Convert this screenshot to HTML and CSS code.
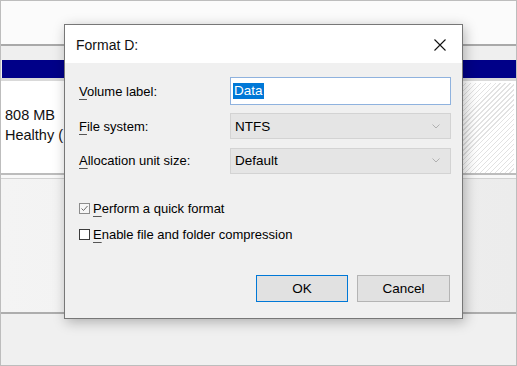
FILE: index.html
```html
<!DOCTYPE html>
<html>
<head>
<meta charset="utf-8">
<link rel="stylesheet" href="styles.css">
</head>
<body>
<div class="window">
  <div class="top"></div>
  <div class="rule"></div>
  <div class="band"></div>
  <div class="bar"></div>
  <div class="parts">
    <div class="part-main">
      <div>808 MB</div>
      <div>Healthy (</div>
    </div>
    <div class="part-hatch"></div>
  </div>
  <div class="parts-foot"></div>
  <div class="panel"></div>
  <div class="bottom"></div>

  <div class="dialog">
    <div class="titlebar">
      <span class="title">Format D:</span>
      <span class="close">
        <svg width="12" height="12" viewBox="0 0 12 12"><path d="M0.5 0.5L11.5 11.5M11.5 0.5L0.5 11.5" stroke="#111" stroke-width="1.1" fill="none"/></svg>
      </span>
    </div>
    <div class="body">
      <div class="form">
        <label class="lbl"><u>V</u>olume label:</label>
        <div class="input"><span class="sel">Data</span></div>
        <label class="lbl"><u>F</u>ile system:</label>
        <div class="select"><span>NTFS</span>
          <svg width="8" height="5" viewBox="0 0 8 5"><path d="M0.5 0.5L4 4L7.5 0.5" stroke="#b0b0b0" fill="none"/></svg>
        </div>
        <label class="lbl"><u>A</u>llocation unit size:</label>
        <div class="select"><span>Default</span>
          <svg width="8" height="5" viewBox="0 0 8 5"><path d="M0.5 0.5L4 4L7.5 0.5" stroke="#b0b0b0" fill="none"/></svg>
        </div>
      </div>
      <div class="checks">
        <div class="check">
          <span class="box checked">
            <svg width="9" height="9" viewBox="0 0 9 9"><path d="M1.5 4.5L3.5 6.5L7.5 2" stroke="#6a6a6a" stroke-width="1" fill="none"/></svg>
          </span>
          <span><u>P</u>erform a quick format</span>
        </div>
        <div class="check">
          <span class="box"></span>
          <span><u>E</u>nable file and folder compression</span>
        </div>
      </div>
      <div class="buttons">
        <div class="btn ok">OK</div>
        <div class="btn cancel">Cancel</div>
      </div>
    </div>
  </div>
</div>
</body>
</html>
```

FILE: styles.css
```css
html, body {
  margin: 0;
  padding: 0;
  background: #ffffff;
}

.window {
  position: relative;
  width: 517px;
  height: 366px;
  box-sizing: border-box;
  border: 1px solid #bdbdbd;
  background: #f0f0f0;
  display: flex;
  flex-direction: column;
  overflow: hidden;
  font-family: "Liberation Sans", Arial, sans-serif;
}

u {
  text-underline-offset: 3px;
  text-decoration-color: #555;
}

.top {
  height: 43px;
  background: #fbfbfb;
  flex: none;
}

.rule {
  height: 2px;
  background: #a9a9a9;
  flex: none;
}

.band {
  height: 14px;
  background: #efefef;
  flex: none;
}

.bar {
  height: 18px;
  background: #000088;
  margin-left: 1px;
  flex: none;
}

.parts {
  height: 92px;
  flex: none;
  display: flex;
  border-top: 3px solid #d9d9d9;
  background: #ffffff;
}

.part-main {
  flex: 1;
  padding: 24px 0 0 4px;
  font-size: 14.5px;
  line-height: 20px;
  color: #111;
}

.part-hatch {
  width: 72px;
  margin: 2px 2px 0 0;
  background: repeating-linear-gradient(135deg, #ffffff 0px, #ffffff 2.5px, #e2e2e2 2.5px, #e2e2e2 3.5px);
}

.parts-foot {
  height: 6px;
  flex: none;
  border-top: 2px solid #bcbcbc;
  border-bottom: 1px solid #d2d2d2;
  box-sizing: border-box;
  background: #f8f8f8;
}

.panel {
  flex: 1;
  background: linear-gradient(90deg, #f4f4f4, #ececec);
  border-bottom: 2px solid #adadad;
}

.bottom {
  height: 51px;
  flex: none;
  background: #f0f0f0;
}

.dialog {
  position: absolute;
  left: 63px;
  top: 23px;
  width: 399px;
  height: 295px;
  box-sizing: border-box;
  border: 1px solid #777777;
  background: #f0f0f0;
  box-shadow: 2px 3px 12px rgba(0, 0, 0, 0.28);
  display: flex;
  flex-direction: column;
}

.titlebar {
  height: 38px;
  flex: none;
  background: #ffffff;
  display: flex;
  align-items: center;
  justify-content: space-between;
  padding-left: 11px;
}

.title {
  font-size: 14px;
  color: #111;
  padding-top: 2px;
}

.close {
  width: 44px;
  height: 38px;
  display: flex;
  align-items: center;
  justify-content: center;
  padding-top: 2px;
  box-sizing: border-box;
}

.body {
  flex: 1;
  display: flex;
  flex-direction: column;
  padding: 14px 11px 16px 14px;
  font-size: 13px;
  color: #000;
}

.form {
  display: grid;
  grid-template-columns: 151px 1fr;
  grid-template-rows: 28px 26px 26px;
  row-gap: 8px;
  align-items: center;
}

.lbl {
  font-size: 13px;
}

.input {
  height: 28px;
  box-sizing: border-box;
  border: 1px solid #8fb2de;
  background: #ffffff;
  display: flex;
  align-items: center;
  padding-left: 2px;
}

.sel {
  background: #0078d7;
  color: #ffffff;
  padding: 0 1px;
  line-height: 16px;
  font-size: 13.5px;
}

.select {
  height: 26px;
  box-sizing: border-box;
  border: 1px solid #d3d3d3;
  background: #e5e5e5;
  display: flex;
  align-items: center;
  justify-content: space-between;
  padding: 0 10px 0 4px;
  font-size: 13.5px;
}

.select:last-child {
  margin-top: 1px;
}

.checks {
  margin-top: 25px;
  display: flex;
  flex-direction: column;
  gap: 6px;
}

.check {
  height: 20px;
  display: flex;
  align-items: center;
  gap: 3px;
}

.box {
  width: 11px;
  height: 11px;
  box-sizing: border-box;
  border: 1px solid #3c3c3c;
  background: #ffffff;
  display: flex;
  align-items: center;
  justify-content: center;
}

.box.checked {
  border-color: #8c8c8c;
  background: #f6f6f6;
}

.buttons {
  margin-top: auto;
  display: flex;
  justify-content: flex-end;
  gap: 9px;
  margin-right: 1px;
}

.btn {
  height: 27px;
  box-sizing: border-box;
  display: flex;
  align-items: center;
  justify-content: center;
  background: #e1e1e1;
  font-size: 13.5px;
}

.ok {
  width: 92px;
  border: 1px solid #0078d7;
}

.cancel {
  width: 93px;
  border: 1px solid #b4b4b4;
}
```
